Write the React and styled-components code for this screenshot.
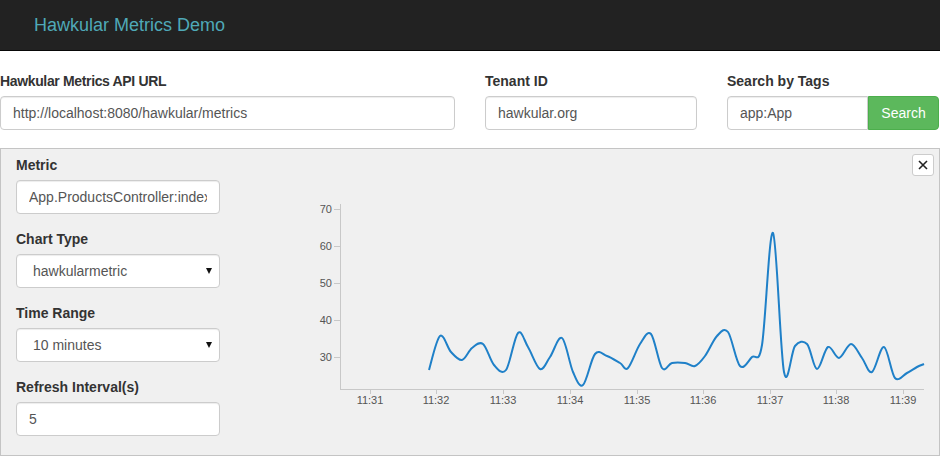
import React from "react";
import styled, { createGlobalStyle } from "styled-components";

const GlobalStyle = createGlobalStyle`
  html, body {
    margin: 0;
    padding: 0;
    background: #fff;
    font-family: "Liberation Sans", Arial, sans-serif;
    font-size: 14px;
    color: #333;
  }
  * { box-sizing: border-box; }
`;

const Navbar = styled.nav`
  height: 51px;
  background: #222;
  border-bottom: 1px solid #080808;
  display: flex;
  align-items: center;
  padding-left: 34px;
  margin-bottom: 20px;
`;

const Brand = styled.span`
  font-size: 18px;
  line-height: 20px;
  color: #4fa9b8;
  margin-top: -1px;
`;

const TopRow = styled.div`
  display: grid;
  grid-template-columns: 455px 212px 212px;
  column-gap: 30px;
  margin-bottom: 18px;
`;

const Group = styled.div`
  display: flex;
  flex-direction: column;
  margin-bottom: ${(p) => p.$mb || 0}px;
`;

const Label = styled.label`
  font-weight: bold;
  font-size: 14px;
  line-height: 20px;
  margin-bottom: 5px;
  color: #333;
  letter-spacing: ${(p) => p.$tight ? "-0.35px" : "0"};
`;

const Input = styled.input`
  height: 34px;
  width: 100%;
  padding: 6px 12px;
  font-family: inherit;
  font-size: 14px;
  color: #555;
  background: #fff;
  border: 1px solid #ccc;
  border-radius: ${(p) => p.$radius || "4px"};
  box-shadow: inset 0 1px 1px rgba(0, 0, 0, 0.075);
  outline: none;
`;

const InputGroup = styled.div`
  display: flex;
`;

const SearchButton = styled.button`
  width: 71px;
  height: 34px;
  flex: none;
  background: #5cb85c;
  border: 1px solid #4cae4c;
  border-radius: 0 4px 4px 0;
  color: #fff;
  font-family: inherit;
  font-size: 14px;
  padding: 0;
`;

const Panel = styled.section`
  position: relative;
  height: 308px;
  background: #f0f0f0;
  border: 1px solid #c4c4c4;
  display: flex;
  padding: 6px 0 0 15px;
`;

const FormColumn = styled.div`
  width: 204px;
  flex: none;
  display: flex;
  flex-direction: column;
`;

const SelectWrap = styled.div`
  position: relative;
  &::after {
    content: "";
    position: absolute;
    right: 8px;
    top: 14px;
    border-left: 3.5px solid transparent;
    border-right: 3.5px solid transparent;
    border-top: 6px solid #111;
    pointer-events: none;
  }
`;

const Select = styled.select`
  appearance: none;
  -webkit-appearance: none;
  width: 100%;
  height: 34px;
  padding: 6px 12px 6px 16px;
  font-family: inherit;
  font-size: 14px;
  color: #555;
  background: #fff;
  border: 1px solid #ccc;
  border-radius: 4px;
  box-shadow: inset 0 1px 1px rgba(0, 0, 0, 0.075);
  outline: none;
`;

const ChartArea = styled.div`
  flex: 1;
  padding-top: 35px;
  margin-left: 20px;
`;

const CloseButton = styled.button`
  position: absolute;
  top: 5px;
  right: 5px;
  width: 22px;
  height: 22px;
  padding: 0;
  background: #fff;
  border: 1px solid #ccc;
  border-radius: 3px;
  display: flex;
  align-items: center;
  justify-content: center;
`;

// chart in page coordinates, shifted by the svg origin
const OX = 240;
const OY = 190;

const points = [
  [429, 370], [440, 336], [451, 352], [462, 360], [472, 348], [483, 344],
  [494, 365], [506, 370], [518, 333], [528, 347], [540, 369], [550, 357],
  [562, 338], [573, 372], [583, 385], [595, 354], [607, 356], [620, 363],
  [628, 368], [640, 344], [651, 334], [662, 368], [672, 363], [685, 363],
  [695, 366], [705, 356], [717, 336], [728, 332], [740, 366], [752, 357],
  [762, 345], [773, 233], [784, 372], [795, 346], [807, 344], [817, 369],
  [828, 347], [839, 358], [851, 344], [862, 358], [872, 372], [884, 347],
  [895, 378], [907, 373], [917, 367], [924, 364],
];

function smoothPath(pts) {
  let d = `M${pts[0][0]},${pts[0][1]}`;
  for (let i = 0; i < pts.length - 1; i++) {
    const p0 = pts[i - 1] || pts[i];
    const p1 = pts[i];
    const p2 = pts[i + 1];
    const p3 = pts[i + 2] || p2;
    const t = 0.5 / 3;
    const c1x = p1[0] + (p2[0] - p0[0]) * t;
    const c1y = p1[1] + (p2[1] - p0[1]) * t;
    const c2x = p2[0] - (p3[0] - p1[0]) * t;
    const c2y = p2[1] - (p3[1] - p1[1]) * t;
    d += ` C${c1x.toFixed(1)},${c1y.toFixed(1)} ${c2x.toFixed(1)},${c2y.toFixed(1)} ${p2[0]},${p2[1]}`;
  }
  return d;
}

const yTicks = [
  [70, 209], [60, 246], [50, 283], [40, 320], [30, 357],
];
const xTicks = [
  ["11:31", 370], ["11:32", 436], ["11:33", 503], ["11:34", 570],
  ["11:35", 637], ["11:36", 703], ["11:37", 770], ["11:38", 836],
  ["11:39", 903],
];

const TickText = styled.text`
  font-family: "Liberation Sans", Arial, sans-serif;
  font-size: 11px;
  fill: #555;
`;

function Chart() {
  return (
    <svg width="698" height="230" style={{ display: "block" }}>
      <g transform={`translate(${-OX},${-OY})`}>
        <line x1="340.5" y1="204" x2="340.5" y2="389.5" stroke="#c8c8c8" />
        <line x1="340" y1="389.5" x2="924" y2="389.5" stroke="#c8c8c8" />
        {yTicks.map(([v, y]) => (
          <g key={v}>
            <line x1="334" y1={y + 0.5} x2="340" y2={y + 0.5} stroke="#c8c8c8" />
            <TickText x="332" y={y + 4} textAnchor="end">{v}</TickText>
          </g>
        ))}
        {xTicks.map(([l, x]) => (
          <g key={l}>
            <line x1={x + 0.5} y1="389" x2={x + 0.5} y2="394" stroke="#c8c8c8" />
            <TickText x={x} y="404" textAnchor="middle">{l}</TickText>
          </g>
        ))}
        <path
          d={smoothPath(points)}
          fill="none"
          stroke="#1f80c8"
          strokeWidth="2"
          strokeLinejoin="round"
        />
      </g>
    </svg>
  );
}

export default function App() {
  return (
    <>
      <GlobalStyle />
      <Navbar>
        <Brand>Hawkular Metrics Demo</Brand>
      </Navbar>
      <TopRow>
        <Group>
          <Label $tight>Hawkular Metrics API URL</Label>
          <Input defaultValue="http://localhost:8080/hawkular/metrics" />
        </Group>
        <Group>
          <Label>Tenant ID</Label>
          <Input defaultValue="hawkular.org" />
        </Group>
        <Group>
          <Label>Search by Tags</Label>
          <InputGroup>
            <Input defaultValue="app:App" $radius="4px 0 0 4px" />
            <SearchButton>Search</SearchButton>
          </InputGroup>
        </Group>
      </TopRow>
      <Panel>
        <FormColumn>
          <Group $mb={15}>
            <Label>Metric</Label>
            <Input defaultValue="App.ProductsController:index" />
          </Group>
          <Group $mb={15}>
            <Label>Chart Type</Label>
            <SelectWrap>
              <Select defaultValue="hawkularmetric">
                <option value="hawkularmetric">hawkularmetric</option>
              </Select>
            </SelectWrap>
          </Group>
          <Group $mb={15}>
            <Label>Time Range</Label>
            <SelectWrap>
              <Select defaultValue="10">
                <option value="10">10 minutes</option>
              </Select>
            </SelectWrap>
          </Group>
          <Group>
            <Label>Refresh Interval(s)</Label>
            <Input defaultValue="5" />
          </Group>
        </FormColumn>
        <ChartArea>
          <Chart />
        </ChartArea>
        <CloseButton aria-label="close">
          <svg width="10" height="10" viewBox="0 0 10 10">
            <path d="M1 1 L9 9 M9 1 L1 9" stroke="#222" strokeWidth="1.6" />
          </svg>
        </CloseButton>
      </Panel>
    </>
  );
}
